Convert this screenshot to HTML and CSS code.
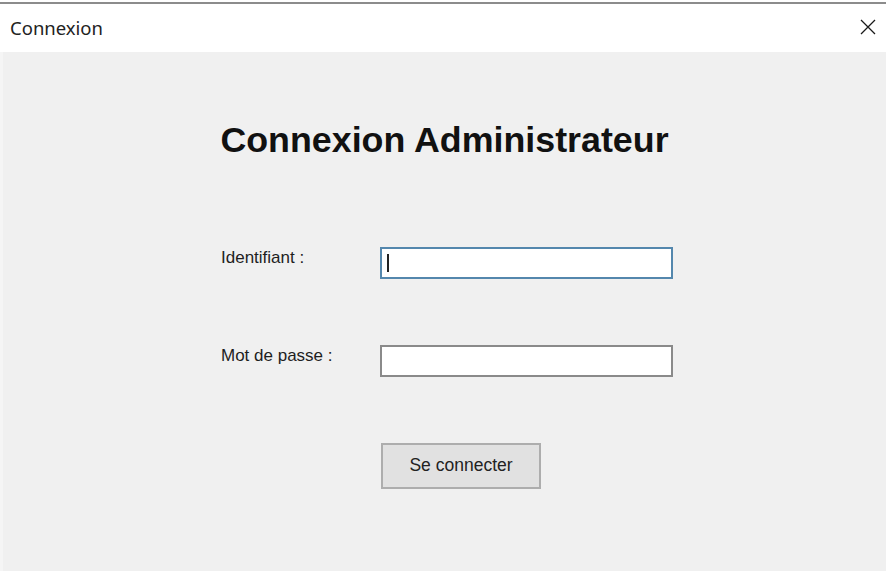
FILE: index.html
```html
<!DOCTYPE html>
<html lang="fr">
<head>
<meta charset="utf-8">
<title>Connexion</title>
<link rel="stylesheet" href="styles.css">
</head>
<body>
<div class="window">
  <div class="titlebar">
    <span class="title">Connexion</span>
    <span class="close" aria-label="Fermer">
      <svg width="16" height="16" viewBox="0 0 16 16"><path d="M1 1 L15 15 M15 1 L1 15" stroke="#1a1a1a" stroke-width="1.3" fill="none"/></svg>
    </span>
  </div>
  <div class="content">
    <h1 class="heading">Connexion Administrateur</h1>
    <div class="form">
      <label class="label">Identifiant :</label>
      <div class="field focused"><span class="caret"></span></div>
      <label class="label">Mot de passe :</label>
      <div class="field"></div>
      <div class="spacer"></div>
      <div class="button">Se connecter</div>
    </div>
  </div>
</div>
</body>
</html>
```

FILE: styles.css
```css
* { box-sizing: border-box; }
html, body { margin: 0; padding: 0; }
body {
  width: 886px;
  height: 571px;
  overflow: hidden;
  background: #f0f0f0;
  font-family: "Liberation Sans", Arial, sans-serif;
}
.window {
  width: 886px;
  height: 571px;
  background: #f0f0f0;
  border-top: 2px solid #ffffff;
  display: flex;
  flex-direction: column;
}
.titlebar {
  height: 50px;
  background: #ffffff;
  border-top: 2px solid #8c8c8c;
  display: flex;
  align-items: center;
  justify-content: space-between;
  padding: 0 10px 2px 10px;
}
.title {
  font-family: "Noto Sans", "Open Sans", sans-serif;
  font-size: 18.5px;
  color: #222;
}
.close {
  display: flex;
  width: 16px;
  height: 16px;
}
.content {
  flex: 1;
  border-left: 3px solid #f5f5f5;
  display: flex;
  flex-direction: column;
  align-items: center;
  padding-top: 68px;
}
.heading {
  margin: 0;
  font-size: 35.8px;
  line-height: 40px;
  font-weight: bold;
  color: #111;
}
.form {
  margin-top: 87px;
  align-self: flex-start;
  margin-left: 218px;
  display: grid;
  grid-template-columns: 159px 293px;
  row-gap: 66px;
}
.label {
  font-size: 17px;
  color: #1e1e1e;
  line-height: 20px;
  padding-top: 1px;
}
.field {
  height: 32px;
  background: #fff;
  border: 2px solid #8a8a8a;
  position: relative;
}
.field.focused {
  border-color: #5487ad;
}
.caret {
  position: absolute;
  left: 5px;
  top: 5px;
  width: 2px;
  height: 18px;
  background: #222;
}
.button {
  margin-left: 1px;
  width: 160px;
  height: 46px;
  background: #e1e1e1;
  border: 2px solid #adadad;
  display: flex;
  align-items: center;
  justify-content: center;
  font-size: 17.5px;
  color: #222;
  padding-bottom: 1px;
}
```
